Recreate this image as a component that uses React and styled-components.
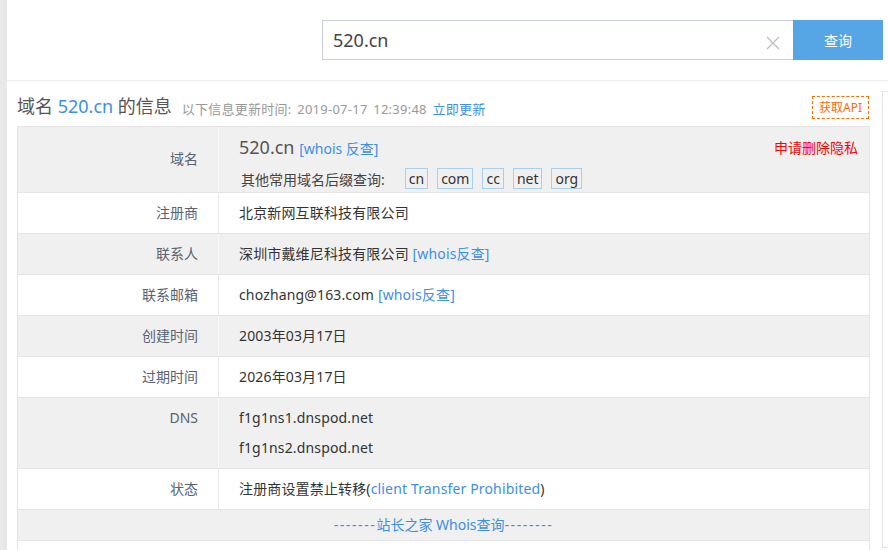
import React from 'react'
import styled, { createGlobalStyle } from 'styled-components'

const GlobalStyle = createGlobalStyle`
  html, body {
    margin: 0;
    padding: 0;
    background: #fff;
  }
  body {
    font-family: "Noto Sans", "Noto Sans CJK SC", sans-serif;
    font-size: 14px;
    color: #333;
  }
`

const Page = styled.div`
  display: flex;
  min-height: 550px;
  overflow: hidden;
`

const SideStrip = styled.div`
  width: 7px;
  flex-shrink: 0;
  background: #e8e8e8;
`

const Main = styled.div`
  flex: 1;
  min-width: 0;
`

const Header = styled.header`
  height: 80px;
  border-bottom: 1px solid #eee;
  display: flex;
  align-items: center;
  justify-content: flex-end;
  padding-right: 5px;
`

const SearchBox = styled.div`
  display: flex;
  height: 40px;
`

const Input = styled.div`
  border: 1px solid #c8cedd;
  border-right: none;
  display: flex;
  align-items: center;
  padding-left: 10px;
  box-sizing: border-box;
  width: 471px;
  font-size: 18px;
  color: #444;
  position: relative;
`

const Clear = styled.span`
  position: absolute;
  right: 12px;
  top: 11px;
  width: 16px;
  height: 16px;
`

const SearchButton = styled.button`
  width: 90px;
  border: none;
  background: #56a6e5;
  color: #fff;
  font-family: inherit;
  font-size: 14px;
`

const Body = styled.div`
  display: flex;
  gap: 12px;
  padding-left: 10px;
`

const Content = styled.div`
  width: 853px;
  flex-shrink: 0;
`

const TitleRow = styled.div`
  display: flex;
  align-items: center;
  height: 23px;
  margin-top: 14px;
  margin-bottom: 8px;
`

const Title = styled.h1`
  margin: 0;
  font-size: 18px;
  font-weight: normal;
  color: #555;
  line-height: 23px;
`

const Blue = styled.span`
  color: #3b8fe5;
`

const UpdateInfo = styled.span`
  margin-left: 10px;
  font-size: 13px;
  color: #999;
  padding-top: 3px;
  word-spacing: 2px;
  letter-spacing: 0.25px;
`

const ApiButton = styled.span`
  margin-left: auto;
  border: 1px dashed #ff6a00;
  color: #ff6a00;
  font-size: 12px;
  height: 23px;
  box-sizing: border-box;
  padding: 0 6px;
  display: flex;
  align-items: center;
  margin-right: 1px;
  margin-top: 1px;
`

const Table = styled.div`
  border: 1px solid #e5e5e5;
  border-bottom: none;
`

const Row = styled.div`
  display: grid;
  grid-template-columns: 201px 1fr;
  background: ${p => (p.$alt ? '#f0f0f0' : '#fff')};
  border-bottom: 1px solid #e5e5e5;
  min-height: ${p => p.$height || 40}px;
`

const Label = styled.div`
  padding: ${p => (p.$center ? '0 20px 2px 0' : '5px 20px 5px 0')};
  line-height: 30px;
  color: #5a6270;
  border-right: 1px solid ${p => (p.$alt ? '#f8f8f8' : '#e8e8e8')};
  display: flex;
  justify-content: flex-end;
  align-items: ${p => (p.$center ? 'center' : 'flex-start')};
`

const Value = styled.div`
  padding: 5px 20px;
  line-height: 30px;
  color: #333;
  letter-spacing: 0.15px;
`

const DomainCell = styled.div`
  padding: 8px 10px 0 20px;
  position: relative;
`

const DomainName = styled.div`
  font-size: 18px;
  line-height: 24px;
  color: #555;
  span {
    font-size: 14px;
    color: #3b8fe5;
  }
`

const PrivacyLink = styled.span`
  position: absolute;
  right: 11px;
  top: 10px;
  color: #f00;
  font-size: 14px;
`

const SuffixLine = styled.div`
  margin-top: 7px;
  display: flex;
  align-items: center;
  gap: 9px;
  padding-left: 2px;
  color: #444;
`

const SuffixLabel = styled.span`
  margin-right: 11px;
`

const Suffix = styled.span`
  border: 1px solid #a7d0f0;
  padding: 0 3px;
  height: 21px;
  line-height: 19px;
  box-sizing: border-box;
  color: #333;
`

const FooterRow = styled.div`
  background: #f0f0f0;
  border-bottom: 1px solid #e5e5e5;
  height: 30px;
  line-height: 30px;
  text-align: center;
  color: #3b8fe5;
`

const Dashes = styled.span`
  letter-spacing: 1.6px;
`

const EmptyRow = styled.div`
  height: 40px;
  border-bottom: 1px solid #e5e5e5;
`

const SidePanel = styled.aside`
  margin-top: 10px;
  height: 457px;
  width: 200px;
  flex-shrink: 0;
  border: 1px solid #e5e5e5;
  box-sizing: border-box;
`

const rows = [
  { label: '注册商', value: '北京新网互联科技有限公司' },
  { label: '联系人', value: '深圳市戴维尼科技有限公司', link: '[whois反查]' },
  { label: '联系邮箱', value: 'chozhang@163.com', link: '[whois反查]' },
  { label: '创建时间', value: '2003年03月17日' },
  { label: '过期时间', value: '2026年03月17日' },
]

const App = () => {
  return (
    <>
      <GlobalStyle />
      <Page>
        <SideStrip />
        <Main>
          <Header>
            <SearchBox>
              <Input>
                520.cn
                <Clear>
                  <svg width="16" height="16" viewBox="0 0 16 16">
                    <path d="M2 2 L14 14 M14 2 L2 14" stroke="#bbb" strokeWidth="1.2" fill="none" />
                  </svg>
                </Clear>
              </Input>
              <SearchButton>查询</SearchButton>
            </SearchBox>
          </Header>
          <Body>
            <Content>
              <TitleRow>
                <Title>
                  域名 <Blue>520.cn</Blue> 的信息
                </Title>
                <UpdateInfo>
                  以下信息更新时间: 2019-07-17 12:39:48 <Blue>立即更新</Blue>
                </UpdateInfo>
                <ApiButton>获取API</ApiButton>
              </TitleRow>
              <Table>
                <Row $alt $height={65}>
                  <Label $alt $center>域名</Label>
                  <DomainCell>
                    <DomainName>
                      520.cn <span>[whois 反查]</span>
                    </DomainName>
                    <PrivacyLink>申请删除隐私</PrivacyLink>
                    <SuffixLine>
                      <SuffixLabel>其他常用域名后缀查询:</SuffixLabel>
                      {['cn', 'com', 'cc', 'net', 'org'].map(s => (
                        <Suffix key={s}>{s}</Suffix>
                      ))}
                    </SuffixLine>
                  </DomainCell>
                </Row>
                {rows.map((r, i) => (
                  <Row key={r.label} $alt={i % 2 === 1}>
                    <Label $alt={i % 2 === 1}>{r.label}</Label>
                    <Value>
                      {r.value}
                      {r.link && <Blue> {r.link}</Blue>}
                    </Value>
                  </Row>
                ))}
                <Row $alt>
                  <Label $alt>DNS</Label>
                  <Value>
                    f1g1ns1.dnspod.net
                    <br />
                    f1g1ns2.dnspod.net
                  </Value>
                </Row>
                <Row>
                  <Label>状态</Label>
                  <Value>
                    注册商设置禁止转移(<Blue>client Transfer Prohibited</Blue>)
                  </Value>
                </Row>
                <FooterRow>
                  <Dashes>-------</Dashes>站长之家 Whois查询<Dashes>--------</Dashes>
                </FooterRow>
                <EmptyRow />
              </Table>
            </Content>
            <SidePanel />
          </Body>
        </Main>
      </Page>
    </>
  )
}

export default App
